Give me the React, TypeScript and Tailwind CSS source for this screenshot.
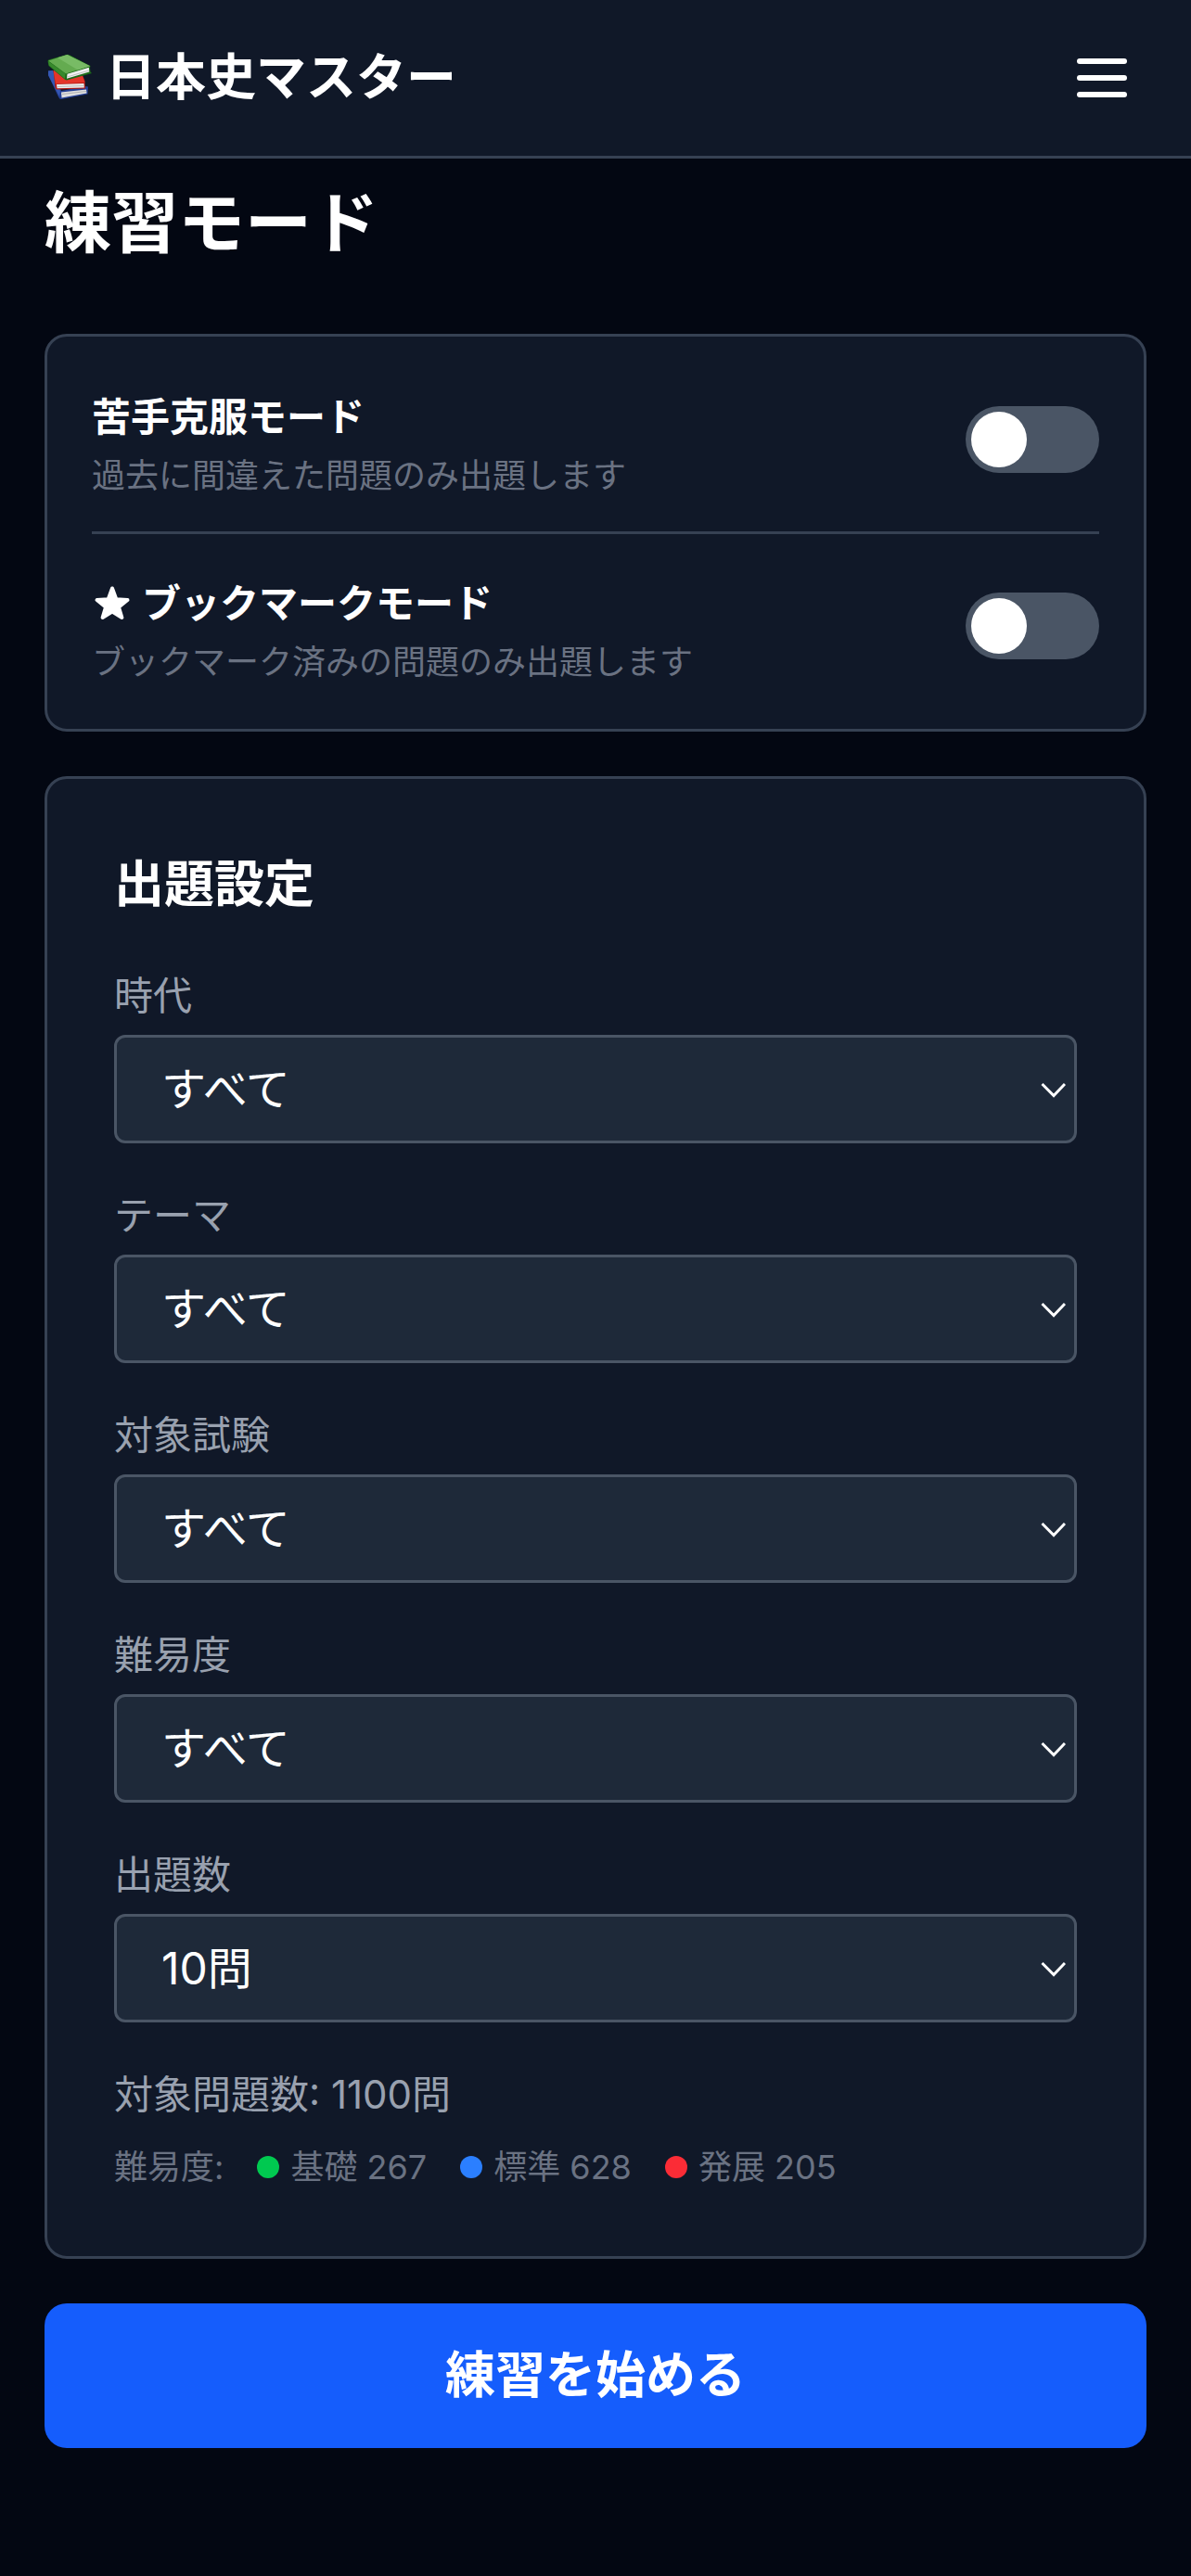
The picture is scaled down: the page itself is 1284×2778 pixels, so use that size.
// Practice mode screen: toggles, question filters and the start button

import { useId, useState } from 'react';

interface ToggleRowProps {
  title: string;
  description: string;
  starred?: boolean;
}

interface SelectFieldProps {
  label: string;
  options: string[];
}

const FILTERS: SelectFieldProps[] = [
  { label: '時代', options: ['すべて', '古代', '中世', '近世', '近代', '現代'] },
  { label: 'テーマ', options: ['すべて', '政治', '経済', '文化', '外交'] },
  { label: '対象試験', options: ['すべて', '共通テスト', '私大', '国公立'] },
  { label: '難易度', options: ['すべて', '基礎', '標準', '発展'] },
  { label: '出題数', options: ['10問', '20問', '30問', '50問'] },
];

const LEVELS = [
  { name: '基礎', count: 267, dot: 'bg-[#00c950]' },
  { name: '標準', count: 628, dot: 'bg-[#2b7fff]' },
  { name: '発展', count: 205, dot: 'bg-[#fb2c36]' },
];

function BooksIcon() {
  return (
    <svg viewBox="0 0 54 54" className="size-[54px] shrink-0" aria-hidden="true">
      {/* blue book */}
      <path d="M4 19.500 L9 19 L18 41 L44 36 L47 36.500 L46.500 44.500 L18 50 Q16 50 15 47.500 L4 24 Z" fill="#243f96" />
      <path d="M4 19.500 L9 19 L17 41 L16 47 L4 24 Z" fill="#3557b4" />
      <path d="M18 42.500 L45 39.500 L45.500 43.500 L18.500 48.500 Z" fill="#dedede" />
      <path d="M19 44.500 L45 41.500" stroke="#a4a4a4" strokeWidth="0.800" />
      {/* red book */}
      <path d="M9.500 19 L40 22 L43.500 30 L44 38.500 L13.500 39.500 Q12 39.500 11.500 37 Z" fill="#b01a15" />
      <path d="M9.500 19 L40 22 L43.500 32 L12 33.500 Z" fill="#e4352a" />
      <path d="M13 34 L42.500 33 L42.800 37.500 L13.500 38.300 Z" fill="#ececec" />
      <path d="M13.500 36.500 L42.500 35.500" stroke="#b0b0b0" strokeWidth="0.800" />
      {/* green book */}
      <path d="M3.500 9 Q3.500 7.800 5 7.300 L23.500 2 Q25.500 1.600 27 2.300 L49.500 14 L49 16 L49.500 20.500 L51 22 L24 29.500 Q22 29.500 20.500 27.500 L4.500 14 Z" fill="#1d6a19" />
      <path d="M4 8.500 L24.500 2 L49 14.200 L23 22.500 Z" fill="#64ab50" />
      <path d="M24.500 2 L49 14.200 L36 18.400 L14 5.300 Z" fill="#78bb65" />
      <path d="M4 9 L22.500 22.500 L22 28 L4.800 13.500 Z" fill="#37892c" />
      <path d="M24.500 22.800 L47.800 15.800 L48.300 20.500 L24 27.800 Z" fill="#f0f0f0" />
      <path d="M24.300 26 L48 19" stroke="#b5b5b5" strokeWidth="0.800" />
    </svg>
  );
}

function StarIcon() {
  return (
    <svg viewBox="0 0 42 42" className="size-[42px] shrink-0" fill="currentColor" aria-hidden="true">
      <path
        d="M22 4.500 L26.300 16.200 L38.500 17 L29 24.800 L32.400 36 L22 29.600 L11.600 36 L15 24.800 L5.500 17 L17.700 16.200 Z"
        stroke="currentColor"
        strokeWidth="4"
        strokeLinejoin="round"
      />
    </svg>
  );
}

function Header() {
  return (
    <header className="flex h-[171px] items-center justify-between border-b-3 border-[#364153] bg-[#101828] px-12">
      <a href="#" className="flex items-center gap-3 text-[54px] leading-[84px] font-bold">
        <BooksIcon />
        日本史マスター
      </a>
      <button type="button" aria-label="メニュー" className="flex flex-col gap-3 p-[21px]">
        <span className="h-1.5 w-[54px] rounded-sm bg-white" />
        <span className="h-1.5 w-[54px] rounded-sm bg-white" />
        <span className="h-1.5 w-[54px] rounded-sm bg-white" />
      </button>
    </header>
  );
}

function ToggleRow({ title, description, starred }: ToggleRowProps) {
  const id = useId();
  const [enabled, setEnabled] = useState(false);

  return (
    <div className="flex items-center justify-between">
      <label htmlFor={id}>
        <span className="flex items-center gap-3 text-[42px] leading-[78px] font-bold">
          {starred && <StarIcon />}
          {title}
        </span>
        <span className="block text-[36px] leading-[48px] font-[380] text-[#6a7282]">{description}</span>
      </label>
      <input
        id={id}
        type="checkbox"
        role="switch"
        checked={enabled}
        onChange={(e) => setEnabled(e.target.checked)}
        className="h-[72px] w-36 shrink-0 cursor-pointer appearance-none rounded-full bg-[#4a5565] p-1.5 before:block before:size-[60px] before:rounded-full before:bg-white checked:bg-[#155dfc] checked:before:translate-x-[72px]"
      />
    </div>
  );
}

function SelectField({ label, options }: SelectFieldProps) {
  const id = useId();

  return (
    <div className="flex flex-col gap-3">
      <label htmlFor={id} className="text-[42px] leading-[60px] font-[380] text-[#99a1af]">
        {label}
      </label>
      <div className="relative">
        <select
          id={id}
          className="block h-[117px] w-full appearance-none rounded-xl border-3 border-[#4a5565] bg-[#1e2939] px-12 text-[48px] font-[380] text-white"
        >
          {options.map((option) => (
            <option key={option}>{option}</option>
          ))}
        </select>
        <svg
          viewBox="0 0 28 18"
          className="pointer-events-none absolute top-1/2 right-3 h-[18px] w-7 -translate-y-1/2"
          fill="none"
          stroke="white"
          strokeWidth="3"
          aria-hidden="true"
        >
          <path d="M2.500 3 L15 15.500 L27 3" />
        </svg>
      </div>
    </div>
  );
}

export default function App() {
  return (
    <div className="min-h-screen bg-[#030712] font-['Inter','Noto_Sans_CJK_JP',sans-serif] text-white" lang="ja">
      <Header />

      <main className="flex flex-col gap-12 px-12 pt-[21px] pb-12">
        <h1 className="mb-6 text-[72px] leading-[96px] font-bold">練習モード</h1>

        <section className="divide-y-3 divide-[#364153] rounded-3xl border-3 border-[#364153] bg-[#101828] p-12">
          <div className="pb-9">
            <ToggleRow title="苦手克服モード" description="過去に間違えた問題のみ出題します" />
          </div>
          <div className="pt-9">
            <ToggleRow title="ブックマークモード" description="ブックマーク済みの問題のみ出題します" starred />
          </div>
        </section>

        <section className="flex flex-col gap-12 rounded-3xl border-3 border-[#364153] bg-[#101828] p-[72px]">
          <h2 className="text-[54px] leading-[84px] font-bold">出題設定</h2>

          {FILTERS.map((filter) => (
            <SelectField key={filter.label} {...filter} />
          ))}

          <div className="flex flex-col gap-6 font-[380]">
            <p className="text-[42px] leading-[60px] text-[#99a1af]">対象問題数: 1100問</p>
            <div className="flex gap-9 text-[36px] leading-[48px] text-[#6a7282]">
              <span>難易度:</span>
              {LEVELS.map((level) => (
                <span key={level.name} className="flex items-center gap-3">
                  <span className={`size-6 rounded-full ${level.dot}`} />
                  {level.name} {level.count}
                </span>
              ))}
            </div>
          </div>
        </section>

        <button type="button" className="rounded-3xl bg-[#155dfc] py-9 text-[54px] leading-[84px] font-bold">
          練習を始める
        </button>
      </main>
    </div>
  );
}
